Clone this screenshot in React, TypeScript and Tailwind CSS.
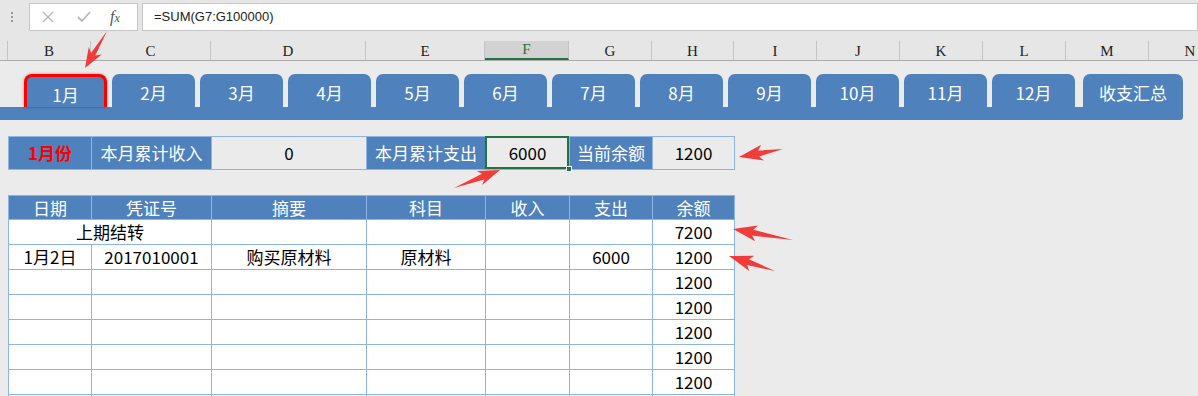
import React from "react";

const FONT = { fontFamily: '"Noto Sans CJK SC", "Noto Sans", sans-serif' };

const colLetters: [string, number][] = [
  ["B", 83], ["C", 120], ["D", 155], ["E", 119], ["F", 84], ["G", 83], ["H", 82],
  ["I", 83], ["J", 83], ["K", 83], ["L", 83], ["M", 83], ["N", 83],
];

const tabs = ["1月", "2月", "3月", "4月", "5月", "6月", "7月", "8月", "9月", "10月", "11月", "12月"];

const W = [83, 120, 155, 119, 84, 83, 82];

type P = [number, number];
function arrowPoints(tail: P, tip: P, headLen = 18, headW = 16, shaftW = 6): string {
  const dx = tip[0] - tail[0];
  const dy = tip[1] - tail[1];
  const len = Math.hypot(dx, dy);
  const ux = dx / len, uy = dy / len;
  const nx = -uy, ny = ux;
  const bx = tip[0] - ux * headLen, by = tip[1] - uy * headLen;
  const wx = tip[0] - ux * (headLen + 4), wy = tip[1] - uy * (headLen + 4);
  const pts: P[] = [
    tail,
    [bx + nx * shaftW / 2, by + ny * shaftW / 2],
    [wx + nx * headW / 2, wy + ny * headW / 2],
    tip,
    [wx - nx * headW / 2, wy - ny * headW / 2],
    [bx - nx * shaftW / 2, by - ny * shaftW / 2],
  ];
  return pts.map((p) => `${p[0].toFixed(1)},${p[1].toFixed(1)}`).join(" ");
}

function Cell({ w, children, className = "" }: { w: number; children?: React.ReactNode; className?: string }) {
  return (
    <div
      className={`shrink-0 flex items-center justify-center border-r border-b border-[#8db4e2] ${className}`}
      style={{ width: w }}
    >
      {children}
    </div>
  );
}

export default function App() {
  const rows: string[][] = [
    ["1月2日", "2017010001", "购买原材料", "原材料", "", "6000", "1200"],
    ["", "", "", "", "", "", "1200"],
    ["", "", "", "", "", "", "1200"],
    ["", "", "", "", "", "", "1200"],
    ["", "", "", "", "", "", "1200"],
    ["", "", "", "", "", "", "1200"],
    ["", "", "", "", "", "", ""],
  ];

  return (
    <div className="relative w-[1198px] h-[396px] overflow-hidden bg-[#ebebeb] text-black" style={FONT}>
      {/* formula bar */}
      <div className="h-[31px] pt-[3px] flex bg-[#e6e6e6]">
        <div className="w-[29px] flex items-center justify-center">
          <div className="flex flex-col gap-[2px] ml-[-5px]">
            <div className="w-[2px] h-[2px] bg-[#9a9a9a]" />
            <div className="w-[2px] h-[2px] bg-[#9a9a9a]" />
            <div className="w-[2px] h-[2px] bg-[#9a9a9a]" />
          </div>
        </div>
        <div className="w-[109px] h-[28px] bg-white border border-[#c6c6c6] flex items-center">
          <svg width="12" height="12" viewBox="0 0 12 12" className="ml-[12px]">
            <path d="M1 1 L11 11 M11 1 L1 11" stroke="#b8b8b8" strokeWidth="1.4" />
          </svg>
          <svg width="14" height="12" viewBox="0 0 14 12" className="ml-[23px]">
            <path d="M1 6 L5 10 L13 1" stroke="#b8b8b8" strokeWidth="1.8" fill="none" />
          </svg>
          <span
            className="ml-[19px] italic text-[16px] text-[#555] leading-none"
            style={{ fontFamily: '"Liberation Serif", serif' }}
          >
            f<span className="text-[12px]">x</span>
          </span>
        </div>
        <div className="ml-[4px] flex-1 h-[28px] bg-white border border-[#c6c6c6] flex items-center pl-[11px]">
          <span className="text-[13px] text-[#222]" style={{ fontFamily: '"Liberation Sans", Arial, sans-serif' }}>
            =SUM(G7:G100000)
          </span>
        </div>
      </div>
      <div className="h-[10px] bg-[#e6e6e6]" />
      {/* column headers */}
      <div className="h-[20px] flex bg-[#e6e6e6] border-b border-[#ababab]" style={{ fontFamily: '"Liberation Serif", serif' }}>
        <div className="w-[8px] shrink-0 border-r border-[#c4c4c4]" />
        {colLetters.map(([l, w]) => (
          <div
            key={l}
            className={`shrink-0 flex items-end justify-center pb-[1px] text-[15px] leading-none border-r border-[#c4c4c4] ${
              l === "F" ? "bg-[#d2d2d2] text-[#217346] border-b-2 border-b-[#217346] pb-0" : "text-[#222]"
            }`}
            style={{ width: w }}
          >
            {l}
          </div>
        ))}
      </div>

      {/* tabs */}
      <div className="mt-[13px] h-[33px] flex items-end pl-[24px]">
        {tabs.map((t, i) => (
          <div
            key={t}
            className={`shrink-0 h-[33px] w-[83px] flex items-center justify-center pt-[5px] text-[17px] text-white bg-[#4f81bd] rounded-t-[7px] ${
              i === 0 ? "border-[3px] border-b-0 border-[#ff0000] rounded-t-[8px] shadow-[0_0_3px_rgba(0,0,0,0.35)]" : ""
            } ${i === 0 ? "" : "ml-[5px]"}`}
          >
            {t}
          </div>
        ))}
        <div className="shrink-0 ml-[8px] h-[33px] w-[100px] flex items-center justify-center pt-[5px] text-[17px] text-white bg-[#4f81bd] rounded-t-[7px]">
          收支汇总
        </div>
      </div>
      <div className="h-[13px] w-[1183px] bg-[#4f81bd] rounded-br-[3px]" />

      {/* summary row */}
      <div className="mt-[16px] ml-[8px] flex w-fit border-t border-l border-[#8db4e2] h-[34px] text-[17px]">
        <Cell w={W[0]} className="bg-[#4f81bd] text-[#ff0000] font-bold">1月份</Cell>
        <Cell w={W[1]} className="bg-[#4f81bd] text-white">本月累计收入</Cell>
        <Cell w={W[2]} className="bg-[#ebebeb]">0</Cell>
        <Cell w={W[3]} className="bg-[#4f81bd] text-white">本月累计支出</Cell>
        <Cell w={W[4]} className="bg-[#ebebeb] relative">
          6000
          <div className="absolute top-[-1px] left-[-1px] right-0 bottom-0 border-2 border-[#217346]" />
          <div className="absolute right-[-3px] bottom-[-3px] w-[6px] h-[6px] bg-[#217346] border border-white" />
        </Cell>
        <Cell w={W[5]} className="bg-[#4f81bd] text-white">当前余额</Cell>
        <Cell w={W[6]} className="bg-[#ebebeb]">1200</Cell>
      </div>

      {/* main table */}
      <div className="mt-[25px] ml-[8px] w-fit border-t border-l border-[#8db4e2] text-[17px]">
        <div className="flex h-[24px] bg-[#4f81bd] text-white">
          {["日期", "凭证号", "摘要", "科目", "收入", "支出", "余额"].map((h, i) => (
            <Cell key={h} w={W[i]}>{h}</Cell>
          ))}
        </div>
        <div className="flex h-[25px] bg-white">
          <Cell w={W[0] + W[1]}>上期结转</Cell>
          <Cell w={W[2]} />
          <Cell w={W[3]} />
          <Cell w={W[4]} />
          <Cell w={W[5]} />
          <Cell w={W[6]}>7200</Cell>
        </div>
        {rows.map((r, ri) => (
          <div key={ri} className="flex h-[25px] bg-white">
            {r.map((c, ci) => (
              <Cell key={ci} w={W[ci]}>{c}</Cell>
            ))}
          </div>
        ))}
      </div>

      {/* red arrows */}
      <svg className="absolute inset-0 pointer-events-none" width="1198" height="396">
        <g fill="#f23b3b">
          <polygon points={arrowPoints([107, 31], [85, 68], 16, 15, 5)} />
          <polygon points={arrowPoints([454, 188], [500, 170], 18, 15, 6)} />
          <polygon points={arrowPoints([783, 149], [739, 157], 20, 16, 6)} />
          <polygon points={arrowPoints([793, 240], [733, 229], 20, 16, 6)} />
          <polygon points={arrowPoints([775, 271], [729, 256], 20, 16, 6)} />
        </g>
      </svg>
    </div>
  );
}
